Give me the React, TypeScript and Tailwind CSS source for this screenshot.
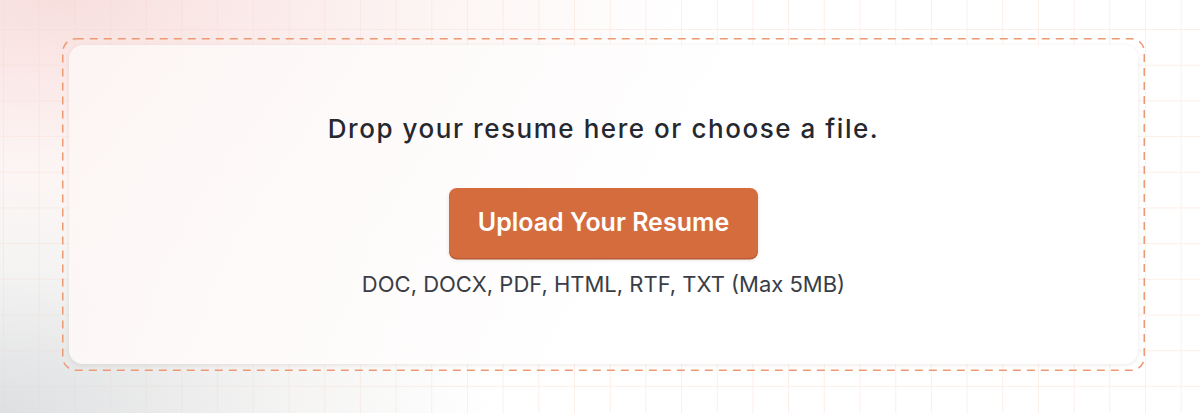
import React from "react"

// dashed outline drawn as svg so the dash pattern can be set
function DashedFrame() {
  return (
    <svg
      aria-hidden="true"
      className="pointer-events-none absolute inset-0 h-full w-full overflow-visible"
    >
      <rect
        x="0.75"
        y="0.75"
        width="calc(100% - 1.5px)"
        height="calc(100% - 1.5px)"
        rx="13"
        ry="13"
        fill="none"
        stroke="#ec9a74"
        strokeWidth="1.5"
        strokeDasharray="8 6"
      />
    </svg>
  )
}

export default function App() {
  return (
    <div className="relative h-[413px] w-[1200px] overflow-hidden bg-white font-['Inter','Noto_Sans',sans-serif]">
      {/* grid */}
      <div className="absolute inset-0 bg-[linear-gradient(to_right,#fcefe8_1px,transparent_1px),linear-gradient(to_bottom,#fcefe8_1px,transparent_1px)] bg-[size:35.7px_35.7px] bg-[position:3px_29px]" />
      {/* soft colour wash */}
      <div className="absolute inset-0 bg-[radial-gradient(ellipse_70%_90%_at_5%_0%,rgba(245,212,210,0.75),rgba(248,226,224,0.35)_45%,transparent_75%)]" />
      <div className="absolute inset-0 bg-[radial-gradient(ellipse_55%_80%_at_0%_100%,rgba(218,220,222,0.9),rgba(230,228,226,0.4)_45%,transparent_75%)]" />

      <div className="relative px-[62px] pt-[38px]">
        <div className="relative h-[333px] w-[1083px] rounded-[14px] p-[7px]">
          <DashedFrame />
          <div className="flex h-full flex-col items-center rounded-[14px] bg-[linear-gradient(120deg,rgba(252,245,244,0.96),rgba(255,255,255,0.98)_55%)] pt-[66px] shadow-[0_1px_4px_rgba(120,90,80,0.14)]">
            <h2 className="text-[26px] leading-9 font-medium tracking-[1.55px] text-[#262830]">
              Drop your resume here or choose a file.
            </h2>
            <button className="mt-[41px] h-[70px] w-[309px] rounded-lg bg-[#d46c3e] text-[25px] font-semibold text-white shadow-[0_1.5px_0_#b95a32,0_2px_4px_rgba(0,0,0,0.12)]">
              Upload Your Resume
            </button>
            <p className="mt-[10px] text-[22px] leading-8 text-[#3a3d45]">
              DOC, DOCX, PDF, HTML, RTF, TXT (Max 5MB)
            </p>
          </div>
        </div>
      </div>
    </div>
  )
}
